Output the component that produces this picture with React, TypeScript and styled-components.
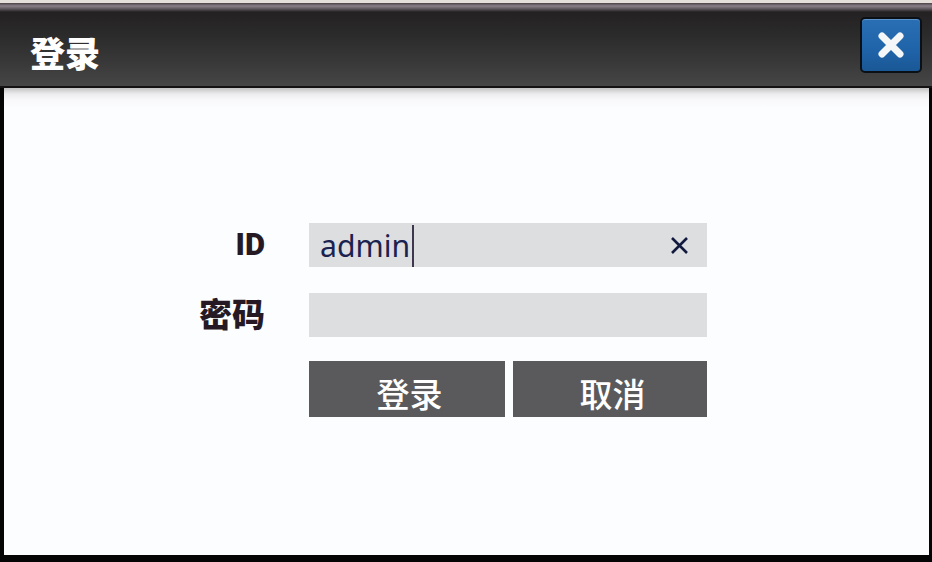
import styled, { createGlobalStyle } from "styled-components";

const GlobalStyle = createGlobalStyle`
  html, body {
    margin: 0;
    padding: 0;
    background: #050505;
  }
`;

const fontStack = `"Noto Sans", "Noto Sans CJK SC", sans-serif`;

const Screen = styled.div`
  width: 932px;
  height: 562px;
  display: flex;
  flex-direction: column;
  overflow: hidden;
  background: #050505;
  font-family: ${fontStack};
`;

const TitleBar = styled.header`
  height: 88px;
  flex-shrink: 0;
  box-sizing: border-box;
  display: flex;
  align-items: center;
  justify-content: space-between;
  padding: 0 10px 0 30px;
  border-top: 3px solid #e4dfd8;
  border-bottom: 2px solid #141212;
  background: linear-gradient(
    to bottom,
    #4a4347 0,
    #8a7f86 3px,
    #6d656b 5px,
    #242122 9px,
    #2b2a2a 30px,
    #3b3a3a 62px,
    #474646 100%
  );
`;

const Title = styled.h1`
  margin: 19px 0 0;
  font-size: 35px;
  line-height: 40px;
  font-weight: 900;
  color: #ffffff;
`;

const CloseButton = styled.button`
  width: 62px;
  height: 56px;
  padding: 0;
  display: flex;
  align-items: center;
  justify-content: center;
  border: 2px solid #0b1016;
  border-radius: 5px;
  background: linear-gradient(to bottom, #2a6fb3 0%, #1f63a8 60%, #1a5896 100%);
  box-shadow: inset 0 1px 0 #5c93c8;
`;

const Body = styled.main`
  flex: 1;
  margin: 0 3px 7px 4px;
  padding: 135px 0 0 195px;
  background: linear-gradient(to bottom, #c4c3c4 0, #ecebed 6px, #f8f8fa 12px, #fcfdff 20px);
`;

const Form = styled.form`
  display: grid;
  grid-template-columns: 66px 398px;
  column-gap: 44px;
  row-gap: 26px;
  align-items: center;
`;

const Label = styled.label<{ $latin?: boolean }>`
  text-align: right;
  font-family: ${(p) => (p.$latin ? `Roboto, sans-serif` : fontStack)};
  font-size: ${(p) => (p.$latin ? "31px" : "33px")};
  line-height: 44px;
  font-weight: 900;
  color: #251a24;
`;

const Field = styled.div`
  height: 44px;
  box-sizing: border-box;
  display: flex;
  align-items: center;
  justify-content: space-between;
  padding: 0 17px 0 11px;
  background: #dddee0;
`;

const Value = styled.span`
  font-size: 30.2px;
  line-height: 44px;
  color: #1a2350;
  border-right: 2px solid #3f3650;
  padding-right: 2px;
  height: 42px;
  display: block;
  margin-top: 1px;
`;

const ValueText = styled.span`
  position: relative;
  top: -1px;
`;

const ClearIcon = styled.svg`
  width: 21px;
  height: 21px;
  display: block;
`;

const Actions = styled.div`
  grid-column: 2;
  display: grid;
  grid-template-columns: 196px 194px;
  column-gap: 8px;
  margin-top: -2px;
`;

const ActionButton = styled.button`
  height: 56px;
  padding: 11px 0 0 5px;
  border: 0;
  background: #5a5a5c;
  color: #ffffff;
  font-family: ${fontStack};
  font-size: 33px;
  line-height: 40px;
  font-weight: 500;
`;

export default function App() {
  return (
    <>
      <GlobalStyle />
      <Screen>
        <TitleBar>
          <Title>登录</Title>
          <CloseButton type="button" aria-label="关闭">
            <svg width="30" height="30" viewBox="0 0 30 30">
              <path
                d="M6 6 L24 24 M24 6 L6 24"
                stroke="#f4f6f8"
                strokeWidth="7"
                strokeLinecap="round"
                fill="none"
              />
            </svg>
          </CloseButton>
        </TitleBar>
        <Body>
          <Form>
            <Label $latin>ID</Label>
            <Field>
              <Value>
                <ValueText>admin</ValueText>
              </Value>
              <ClearIcon viewBox="0 0 21 21">
                <path
                  d="M3 3 L18 18 M18 3 L3 18"
                  stroke="#12193f"
                  strokeWidth="2.6"
                  fill="none"
                />
              </ClearIcon>
            </Field>
            <Label>密码</Label>
            <Field />
            <Actions>
              <ActionButton type="button">登录</ActionButton>
              <ActionButton type="button">取消</ActionButton>
            </Actions>
          </Form>
        </Body>
      </Screen>
    </>
  );
}
